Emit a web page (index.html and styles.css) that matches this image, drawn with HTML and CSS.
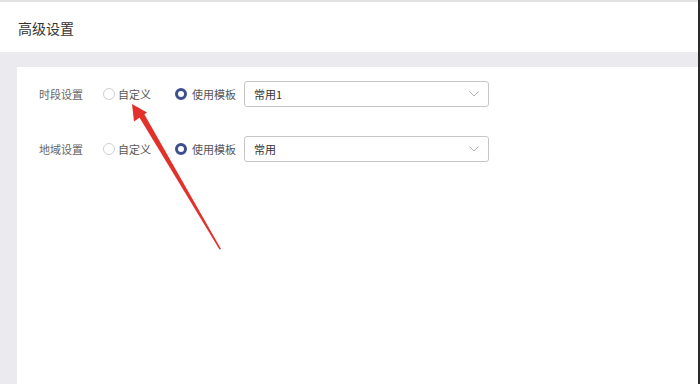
FILE: index.html
```html
<!DOCTYPE html>
<html lang="zh-CN">
<head>
<meta charset="utf-8">
<title>高级设置</title>
<link rel="stylesheet" href="styles.css">
</head>
<body>
<div class="page">
  <header class="header"><h1 class="title">高级设置</h1></header>
  <main class="body">
    <section class="card">
      <div class="row">
        <span class="label">时段设置</span>
        <label class="radio"><span class="dot"></span><span class="rtext">自定义</span></label>
        <label class="radio checked"><span class="dot"></span><span class="rtext">使用模板</span></label>
        <div class="select"><span class="value">常用1</span>
          <svg class="chev" width="10" height="6" viewBox="0 0 10 6"><path d="M0.5 0.5 L5 5 L9.5 0.5" fill="none" stroke="#b0b0b0" stroke-width="1"/></svg>
        </div>
      </div>
      <div class="row">
        <span class="label">地域设置</span>
        <label class="radio"><span class="dot"></span><span class="rtext">自定义</span></label>
        <label class="radio checked"><span class="dot"></span><span class="rtext">使用模板</span></label>
        <div class="select"><span class="value">常用</span>
          <svg class="chev" width="10" height="6" viewBox="0 0 10 6"><path d="M0.5 0.5 L5 5 L9.5 0.5" fill="none" stroke="#b0b0b0" stroke-width="1"/></svg>
        </div>
      </div>
    </section>
  </main>
  <svg class="arrow" width="700" height="384" viewBox="0 0 700 384">
    <polygon points="137,113.5 143,112 221,249 219.5,249.5" fill="#e2312b"/>
    <polygon points="132,104 147,112.5 134,121.5" fill="#e2312b"/>
  </svg>
</div>
</body>
</html>
```

FILE: styles.css
```css
* { box-sizing: border-box; }
html, body { margin: 0; padding: 0; }
body {
  font-family: "Noto Sans CJK SC", "Noto Sans", sans-serif;
  background: #fff;
}
.page {
  position: relative;
  width: 700px;
  height: 384px;
  display: flex;
  flex-direction: column;
  border-right: 2px solid #2a2a2a;
  overflow: hidden;
}
.header {
  height: 52px;
  border-top: 2px solid #e2e2e2;
  display: flex;
  align-items: center;
  padding-left: 18px;
  background: #fff;
}
.title {
  margin: 0;
  font-size: 14px;
  font-weight: normal;
  color: #333;
  line-height: 1;
  margin-top: 2px;
}
.body {
  flex: 1;
  background: #ebebef;
  padding: 15px 0 0 17px;
  display: flex;
}
.card {
  flex: 1;
  background: #fff;
  padding: 14px 0 0 22px;
}
.row {
  display: flex;
  align-items: center;
  height: 26px;
  margin-bottom: 29px;
  font-size: 11px;
}
.label {
  width: 64px;
  color: #666;
}
.radio {
  display: flex;
  align-items: center;
  margin-right: 24px;
  color: #555;
}
.radio .dot {
  width: 12px;
  height: 12px;
  border-radius: 50%;
  border: 1px solid #cfcfcf;
  background: #fff;
  margin-right: 3px;
}
.radio.checked {
  margin-right: 8px;
}
.radio.checked .dot {
  width: 12px;
  height: 12px;
  border: 3.5px solid #3c4f8e;
  margin-right: 5px;
}
.select {
  width: 245px;
  height: 26px;
  border: 1px solid #c6c6c6;
  border-radius: 3px;
  display: flex;
  align-items: center;
  justify-content: space-between;
  padding: 0 9px 0 9px;
  color: #333;
}
.chev { display: block; }
.arrow {
  position: absolute;
  left: 0;
  top: 0;
  pointer-events: none;
}
```
